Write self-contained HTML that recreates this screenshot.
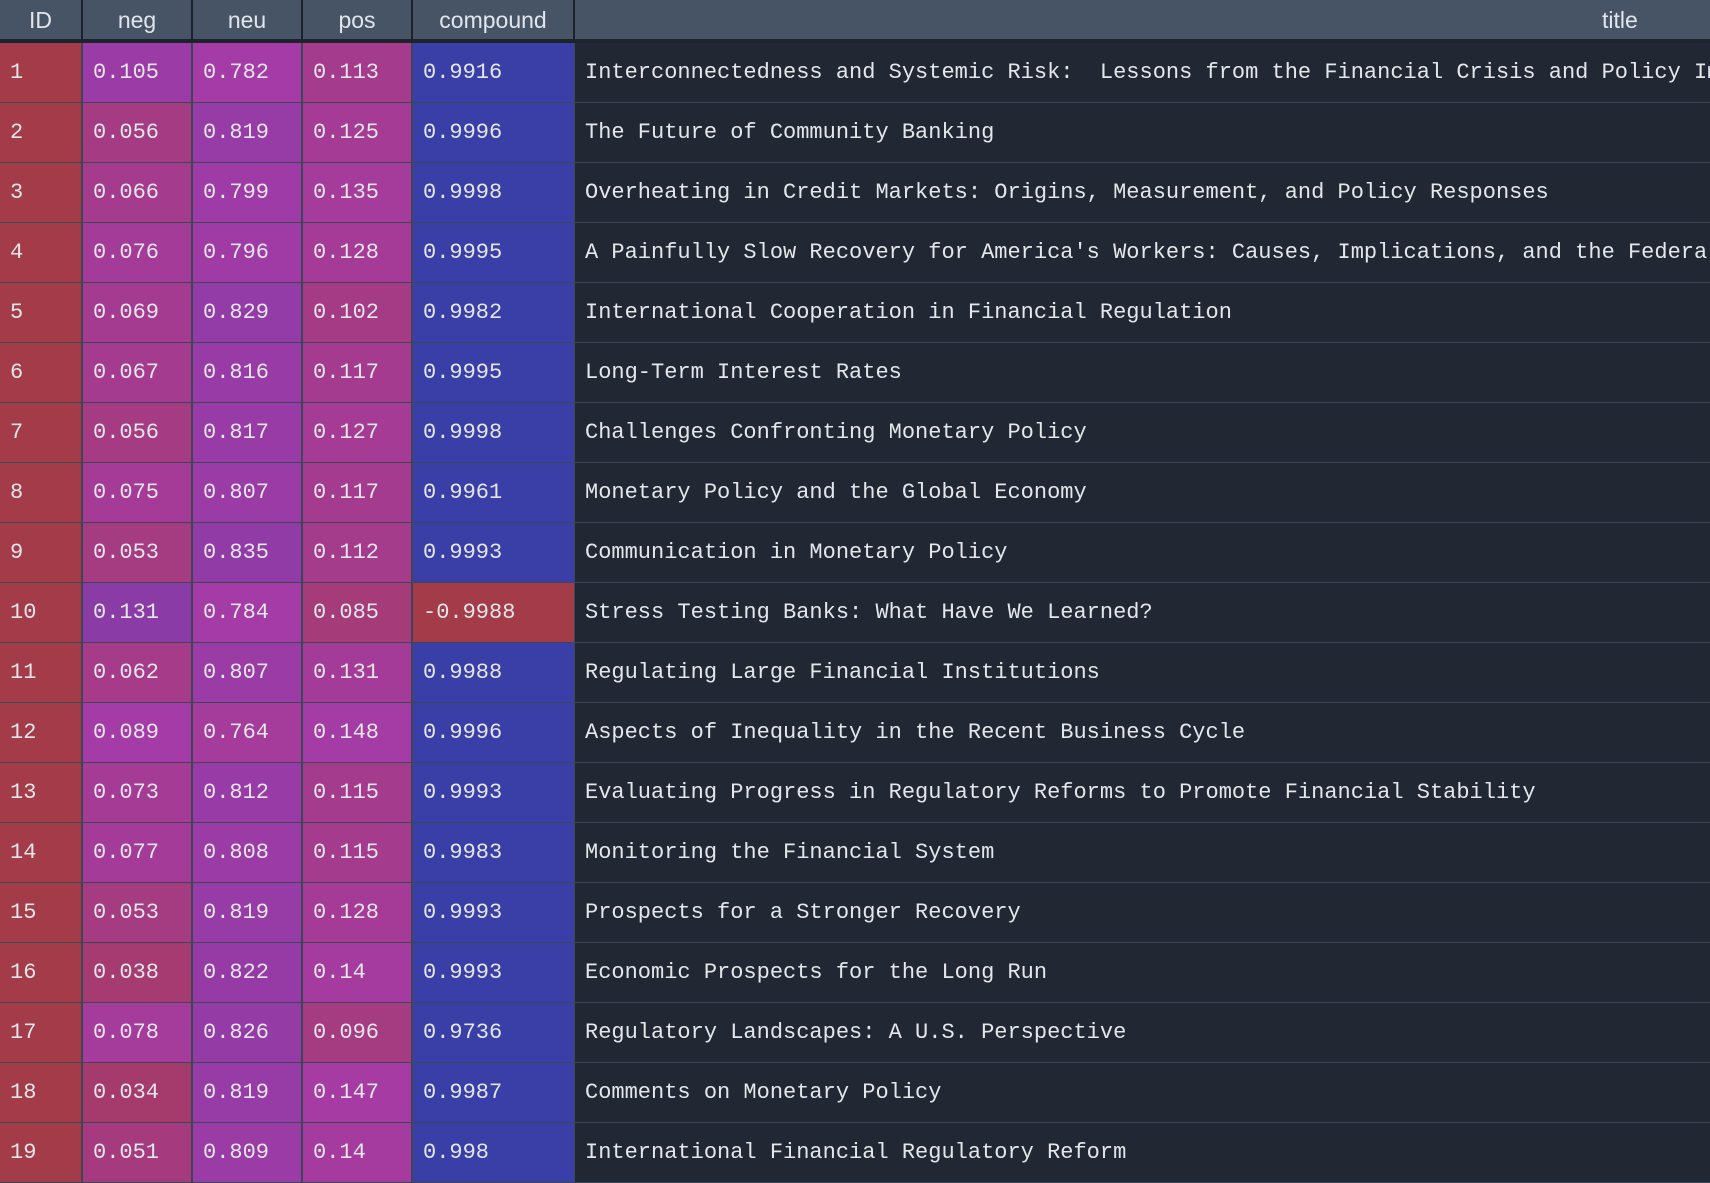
<!DOCTYPE html>
<html><head><meta charset="utf-8"><style>
*{margin:0;padding:0;box-sizing:border-box}
body{width:1710px;height:1178px;overflow:hidden;background:#222833;font-family:"Liberation Mono",monospace}
.hdr{position:absolute;left:0;top:0;width:1710px;height:43px;background:#1d232c}
.hdr div{position:absolute;top:0;height:39px;background:#465466;color:#e2e6ec;font-family:"Liberation Sans",sans-serif;font-size:23px;line-height:40px;text-align:center}
.row{position:absolute;left:0;width:1710px;height:60px;background:#3b4656;overflow:hidden}
.row div{position:absolute;top:0;height:59px;line-height:60px;font-size:22px;color:#e4e6ea;padding-left:10px;white-space:pre;overflow:hidden}
.c0{left:0;width:81px;background:#a33b48}
.c1{left:83px;width:108px}
.c2{left:193px;width:108px}
.c3{left:303px;width:108px}
.c4{left:413px;width:161px;background:#3a3fa8}
.c5{left:575px;width:1135px;background:#222833}
.neg4{background:#a33b48!important}
</style></head><body>
<div class="hdr">
<div style="left:0;width:81px">ID</div>
<div style="left:83px;width:108px">neg</div>
<div style="left:193px;width:108px">neu</div>
<div style="left:303px;width:108px">pos</div>
<div style="left:413px;width:160px">compound</div>
<div style="left:575px;width:1135px;text-align:left;padding-left:1027px">title</div>
</div>
<div id="t">
<div class="row"><div class="c0">1</div><div class="c1">0.105</div><div class="c2">0.782</div><div class="c3">0.113</div><div class="c4">0.9916</div><div class="c5">Interconnectedness and Systemic Risk:  Lessons from the Financial Crisis and Policy Implications</div></div>
<div class="row"><div class="c0">2</div><div class="c1">0.056</div><div class="c2">0.819</div><div class="c3">0.125</div><div class="c4">0.9996</div><div class="c5">The Future of Community Banking</div></div>
<div class="row"><div class="c0">3</div><div class="c1">0.066</div><div class="c2">0.799</div><div class="c3">0.135</div><div class="c4">0.9998</div><div class="c5">Overheating in Credit Markets: Origins, Measurement, and Policy Responses</div></div>
<div class="row"><div class="c0">4</div><div class="c1">0.076</div><div class="c2">0.796</div><div class="c3">0.128</div><div class="c4">0.9995</div><div class="c5">A Painfully Slow Recovery for America's Workers: Causes, Implications, and the Federal Reserve's Response</div></div>
<div class="row"><div class="c0">5</div><div class="c1">0.069</div><div class="c2">0.829</div><div class="c3">0.102</div><div class="c4">0.9982</div><div class="c5">International Cooperation in Financial Regulation</div></div>
<div class="row"><div class="c0">6</div><div class="c1">0.067</div><div class="c2">0.816</div><div class="c3">0.117</div><div class="c4">0.9995</div><div class="c5">Long-Term Interest Rates</div></div>
<div class="row"><div class="c0">7</div><div class="c1">0.056</div><div class="c2">0.817</div><div class="c3">0.127</div><div class="c4">0.9998</div><div class="c5">Challenges Confronting Monetary Policy</div></div>
<div class="row"><div class="c0">8</div><div class="c1">0.075</div><div class="c2">0.807</div><div class="c3">0.117</div><div class="c4">0.9961</div><div class="c5">Monetary Policy and the Global Economy</div></div>
<div class="row"><div class="c0">9</div><div class="c1">0.053</div><div class="c2">0.835</div><div class="c3">0.112</div><div class="c4">0.9993</div><div class="c5">Communication in Monetary Policy</div></div>
<div class="row"><div class="c0">10</div><div class="c1">0.131</div><div class="c2">0.784</div><div class="c3">0.085</div><div class="c4 neg4">-0.9988</div><div class="c5">Stress Testing Banks: What Have We Learned?</div></div>
<div class="row"><div class="c0">11</div><div class="c1">0.062</div><div class="c2">0.807</div><div class="c3">0.131</div><div class="c4">0.9988</div><div class="c5">Regulating Large Financial Institutions</div></div>
<div class="row"><div class="c0">12</div><div class="c1">0.089</div><div class="c2">0.764</div><div class="c3">0.148</div><div class="c4">0.9996</div><div class="c5">Aspects of Inequality in the Recent Business Cycle</div></div>
<div class="row"><div class="c0">13</div><div class="c1">0.073</div><div class="c2">0.812</div><div class="c3">0.115</div><div class="c4">0.9993</div><div class="c5">Evaluating Progress in Regulatory Reforms to Promote Financial Stability</div></div>
<div class="row"><div class="c0">14</div><div class="c1">0.077</div><div class="c2">0.808</div><div class="c3">0.115</div><div class="c4">0.9983</div><div class="c5">Monitoring the Financial System</div></div>
<div class="row"><div class="c0">15</div><div class="c1">0.053</div><div class="c2">0.819</div><div class="c3">0.128</div><div class="c4">0.9993</div><div class="c5">Prospects for a Stronger Recovery</div></div>
<div class="row"><div class="c0">16</div><div class="c1">0.038</div><div class="c2">0.822</div><div class="c3">0.14</div><div class="c4">0.9993</div><div class="c5">Economic Prospects for the Long Run</div></div>
<div class="row"><div class="c0">17</div><div class="c1">0.078</div><div class="c2">0.826</div><div class="c3">0.096</div><div class="c4">0.9736</div><div class="c5">Regulatory Landscapes: A U.S. Perspective</div></div>
<div class="row"><div class="c0">18</div><div class="c1">0.034</div><div class="c2">0.819</div><div class="c3">0.147</div><div class="c4">0.9987</div><div class="c5">Comments on Monetary Policy</div></div>
<div class="row"><div class="c0">19</div><div class="c1">0.051</div><div class="c2">0.809</div><div class="c3">0.14</div><div class="c4">0.998</div><div class="c5">International Financial Regulatory Reform</div></div>
</div>
<script>
function col(t){t=Math.max(0,Math.min(1,t));var r,g=59,b;
if(t<0.5){r=165;b=72+(166-72)*t*2;}else{r=165-(165-110)*(t-0.5)*2;b=166;}
return "rgb("+Math.round(r)+","+g+","+Math.round(b)+")";}
var rows=document.querySelectorAll('.row');
rows.forEach(function(row,i){row.style.top=(43+i*60)+"px";
var n=parseFloat(row.querySelector('.c1').textContent),
u=parseFloat(row.querySelector('.c2').textContent),
p=parseFloat(row.querySelector('.c3').textContent);
row.querySelector('.c1').style.background=col(5.6*n);
row.querySelector('.c2').style.background=col(0.5+3.5*(u-0.782));
row.querySelector('.c3').style.background=col(0.26+3.6*(p-0.085));});
</script>
</body></html>
